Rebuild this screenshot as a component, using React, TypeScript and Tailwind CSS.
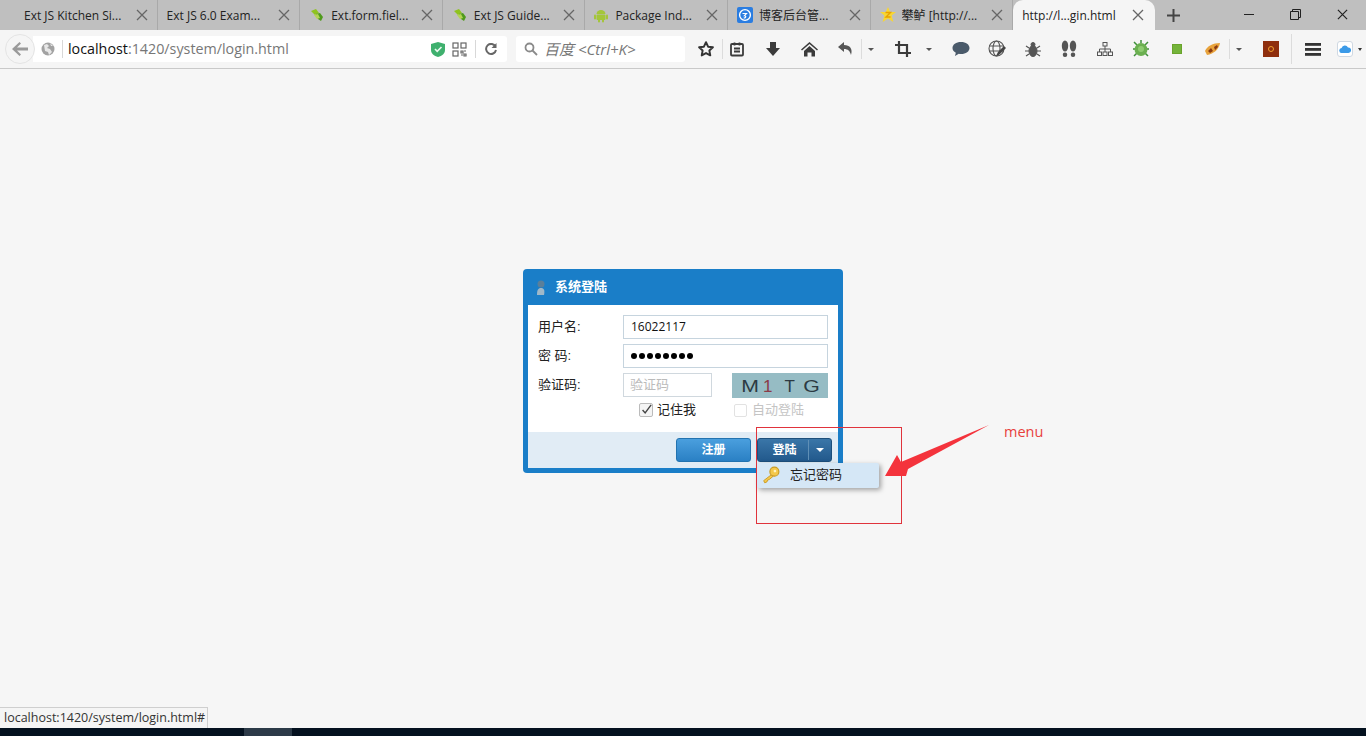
import { ReactNode } from 'react';

const ui = "font-['Open_Sans','Noto_Sans_CJK_SC',sans-serif]";
const cjk = "font-['Liberation_Sans','Noto_Sans_CJK_SC',sans-serif]";

const CloseX = ({ size = 12, color = '#666' }: { size?: number; color?: string }) => (
    <svg width={size} height={size} viewBox="0 0 12 12" stroke={color} strokeWidth="1.3" fill="none"><path d="M1 1 11 11M11 1 1 11" /></svg>
);

const LeafIcon = () => (
    <svg width="16" height="16" viewBox="0 0 16 16"><path d="M2 4 7 2l3 4-4 2z" fill="#8fc31f" /><path d="M7 7l4-1 3 4-2 4-3-2z" fill="#4f9a1c" /><path d="M5 8l4-1 2 4-3 1z" fill="#b4d455" /></svg>
);
const AndroidIcon = () => (
    <svg width="16" height="16" viewBox="0 0 16 16" fill="#a4c639"><path d="M3.5 7a4.5 4 0 0 1 9 0z" /><rect x="3.5" y="7.6" width="9" height="5.4" rx="1" /><rect x="1" y="7.6" width="2" height="5" rx="1" /><rect x="13" y="7.6" width="2" height="5" rx="1" /><rect x="5" y="12" width="2" height="3.4" rx="1" /><rect x="9" y="12" width="2" height="3.4" rx="1" /></svg>
);
const BlogIcon = () => (
    <svg width="16" height="16" viewBox="0 0 16 16"><rect width="16" height="16" rx="2" fill="#2a7de1" /><circle cx="8" cy="8" r="5.4" fill="none" stroke="#fff" strokeWidth="1.4" /><path d="M5.5 6.5h4l-2 2.2c1.6 0 2 2.4-.8 2.4" fill="none" stroke="#fff" strokeWidth="1.2" /></svg>
);
const ZIcon = () => (
    <svg width="16" height="16" viewBox="0 0 16 16"><path d="M8 0l2.2 5H16l-4.4 3.6L13.4 15 8 11.6 2.6 15l1.8-6.4L0 5h5.8z" fill="#f7d634" /><path d="M5.5 5.5h5L6 10h4.6" fill="none" stroke="#e9a100" strokeWidth="1.4" /></svg>
);

const tabs: { title: string; icon?: ReactNode; cls: string }[] = [
    { title: 'Ext JS Kitchen Si...', cls: 'pl-[9px]' },
    { title: 'Ext JS 6.0 Exam...', cls: 'pl-[9px]' },
    { title: 'Ext.form.fiel...', icon: <LeafIcon />, cls: 'pl-[9px]' },
    { title: 'Ext JS Guide...', icon: <LeafIcon />, cls: 'pl-[9px]' },
    { title: 'Package Ind...', icon: <AndroidIcon />, cls: 'pl-[8px]' },
    { title: '博客后台管...', icon: <BlogIcon />, cls: 'pl-[9px]' },
    { title: '攀鲈 [http://...', icon: <ZIcon />, cls: 'pl-[9px]' },
];

const Sep = ({ className = 'h-5' }: { className?: string }) => <div className={`w-px bg-[#dcdcdc] ${className}`} />;
const Caret = () => <div className="h-0 w-0 border-x-[3px] border-t-[3px] border-x-transparent border-t-[#555]" />;

const dark = '#3b3b3b';

// x is the icon's centre on the page
const toolIcons: { x: number; w: number; el: ReactNode }[] = [
    { x: 706, w: 24, el: <svg width="18" height="18" viewBox="0 0 24 24" fill="none" stroke="#333" strokeWidth="2.6" strokeLinejoin="round"><path d="m12 3 2.8 5.9 6.4.8-4.7 4.4 1.2 6.4L12 17.4l-5.7 3.1 1.2-6.4-4.7-4.4 6.4-.8z" /></svg> },
    { x: 722, w: 1, el: <Sep /> },
    { x: 737, w: 24, el: <svg width="16" height="16" viewBox="0 0 16 16" fill="none" stroke={dark} strokeWidth="1.8"><rect x="2" y="3" width="12" height="11.5" rx="1" /><path d="M5.5 1.5v3M10.5 1.5v3M5 7.5h6M5 10.5h6" /></svg> },
    { x: 773, w: 24, el: <svg width="16" height="16" viewBox="0 0 16 16" fill={dark}><path d="M5 1h6v6h4l-7 8-7-8h4z" /></svg> },
    { x: 809, w: 24, el: <svg width="17" height="16" viewBox="0 0 17 16" fill={dark}><path d="M8.5 1 0 8.500l1 1L8.500 3 16 9.500l1-1zM3 10l5.500-5 5.500 5v5.500h-3.500v-4h-4v4H3z" /></svg> },
    { x: 845, w: 24, el: <svg width="17" height="16" viewBox="0 0 17 16" fill="none"><path d="M7 1 1 6l6 5V8c4 0 6 2 7 6 2-6-1-10-7-10z" fill="#555" /></svg> },
    { x: 861, w: 1, el: <Sep /> },
    { x: 871, w: 8, el: <Caret /> },
    { x: 903, w: 24, el: <svg width="16" height="16" viewBox="0 0 16 16" fill="none" stroke={dark} strokeWidth="2.2"><path d="M4 0v12h12M0 4h12v12" /></svg> },
    { x: 929, w: 8, el: <Caret /> },
    { x: 961, w: 24, el: <svg width="18" height="16" viewBox="0 0 18 16" fill="#4a5a6a"><path d="M9 1c5 0 8.500 2.600 8.500 6S14 13 9 13c-.8 0-1.500 0-2.200-.2L3 15l.8-3.300C1.700 10.700.5 9 .5 7 .5 3.600 4 1 9 1z" /></svg> },
    { x: 997, w: 24, el: <svg width="18" height="18" viewBox="0 0 18 18" fill="none" stroke="#555" strokeWidth="1.1"><circle cx="8.500" cy="8.500" r="7.500" /><ellipse cx="8.500" cy="8.500" rx="3.500" ry="7.500" /><path d="M1 6h15M1 11h15" /><path d="m8 16 2-4 6-6 2 2-6 6z" fill="#444" stroke="none" /></svg> },
    { x: 1033, w: 24, el: <svg width="16" height="17" viewBox="0 0 16 17" fill="#555" stroke="#555"><ellipse cx="8" cy="10" rx="4" ry="5.500" /><circle cx="8" cy="3.500" r="2" /><path d="M1 5l3 2M15 5l-3 2M0 10h4M16 10h-4M1 15l3-2M15 15l-3-2" fill="none" strokeWidth="1.2" /></svg> },
    { x: 1069, w: 24, el: <svg width="16" height="18" viewBox="0 0 16 18" fill="#555"><ellipse cx="4" cy="6" rx="3.200" ry="5.500" /><ellipse cx="12" cy="6" rx="3.200" ry="5.500" /><rect x="1.800" y="12.500" width="4.400" height="4.500" rx="2" /><rect x="9.800" y="12.500" width="4.400" height="4.500" rx="2" /></svg> },
    { x: 1105, w: 24, el: <svg width="16" height="16" viewBox="0 0 16 16" fill="none" stroke="#555"><rect x="6" y="1.500" width="4" height="3.500" /><path d="M8 5v3M2.500 11V8h11v3M8 8v3" /><rect x=".5" y="11" width="4" height="3.500" /><rect x="6" y="11" width="4" height="3.500" /><rect x="11.500" y="11" width="4" height="3.500" /></svg> },
    { x: 1141, w: 24, el: <svg width="18" height="18" viewBox="0 0 18 18"><path d="M2 2l3 3M16 2l-3 3M1 9h2M15 9h2M2 16l3-3M16 16l-3-3M9 0v3" stroke="#3f8f3a" strokeWidth="1.500" /><circle cx="9" cy="9.500" r="6.500" fill="#6bb050" /><circle cx="9" cy="9" r="3" fill="#8ecb70" /></svg> },
    { x: 1177, w: 24, el: <div className="h-[10px] w-[10px] border border-[#6aa32c] bg-[#74b43a]" /> },
    { x: 1213, w: 24, el: <svg width="18" height="14" viewBox="0 0 18 14"><path d="M1 9c2-5 8-8 15-8-1 6-6 11-13 12z" fill="#e8a33c" /><path d="M4 9l3-3 2 3-3 2zM10 5l3-2 1 2-3 3z" fill="#8a3a12" /></svg> },
    { x: 1229, w: 1, el: <Sep /> },
    { x: 1239, w: 8, el: <Caret /> },
    { x: 1271, w: 24, el: <div className="flex h-4 w-4 items-center justify-center bg-[#8f2f0e]"><div className="h-[6px] w-[6px] rounded-full border border-[#f0a030]" /></div> },
    { x: 1291, w: 1, el: <Sep className="h-[30px]" /> },
    { x: 1313, w: 24, el: <svg width="16" height="13" viewBox="0 0 16 13" fill="#333"><rect width="16" height="2.800" /><rect y="5" width="16" height="2.800" /><rect y="10" width="16" height="2.800" /></svg> },
    { x: 1345, w: 20, el: <div className="flex h-4 w-4 items-center justify-center rounded-[3px] border border-[#cfd8e2] bg-white"><svg width="12" height="8" viewBox="0 0 12 8" fill="#3b9ae8"><path d="M3 8a2.500 2.500 0 0 1-.4-5A3.500 3.500 0 0 1 9 2.400 2.800 2.800 0 0 1 9.500 8z" /></svg></div> },
    { x: 1360, w: 6, el: <div className="h-0 w-0 border-x-[2px] border-t-[3px] border-x-transparent border-t-[#333]" /> },
];

function Toolbar() {
    let right = 685;
    return (
        <div className="flex items-center">
            {toolIcons.map((icon) => {
                const left = icon.x - icon.w / 2;
                const gap = left - right;
                right = left + icon.w;
                return <div key={icon.x} className="flex shrink-0 items-center justify-center" style={{ width: icon.w, marginLeft: gap }}>{icon.el}</div>;
            })}
        </div>
    );
}

function Field({ label, children }: { label: string; children: ReactNode }) {
    return (
        <div className="flex h-[24px] items-center">
            <span className="w-[85px] text-[13px] text-[#222]">{label}</span>
            {children}
        </div>
    );
}

export default function App() {
    return (
        <div className={`flex h-[736px] w-[1366px] flex-col overflow-hidden bg-[#f6f6f6] ${ui}`}>
            {/* tab strip */}
            <div className="flex h-[30px] shrink-0 bg-[#bfbfbf] pl-[15px]">
                {tabs.map((tab) => (
                    <div key={tab.title} className={`flex h-[30px] w-[142.6px] shrink-0 items-center border-r border-[#a9a9a9] pr-[9px] ${tab.cls}`}>
                        {tab.icon && <span className="mr-[6px] shrink-0">{tab.icon}</span>}
                        <span className="flex-1 truncate whitespace-nowrap pt-[1px] text-[12px] text-[#222]">{tab.title}</span>
                        <CloseX />
                    </div>
                ))}
                <div className="flex h-[30px] w-[142px] shrink-0 items-center rounded-t-[10px] bg-[#f5f5f5] pl-[9px] pr-[11px]">
                    <span className="flex-1 whitespace-nowrap pt-[1px] text-[12px] text-[#222]">http://l...gin.html</span>
                    <CloseX />
                </div>
                <div className="ml-[12px] flex h-[30px] items-center">
                    <svg width="13" height="13" viewBox="0 0 13 13" stroke="#444" strokeWidth="2"><path d="M6.500 0v13M0 6.500h13" /></svg>
                </div>
                <div className="ml-auto flex h-[30px] items-start">
                    <span className="flex w-[46px] justify-center pt-[14px]"><svg width="10" height="1"><rect width="10" height="1" fill="#222" /></svg></span>
                    <span className="flex w-[46px] justify-center pt-[9px]"><svg width="11" height="11" viewBox="0 0 11 11" fill="none" stroke="#222"><path d="M.5 2.500h8v8h-8zM2.500 2.500v-2h8v8h-2" /></svg></span>
                    <span className="flex w-[48px] justify-center pt-[9px]"><CloseX size={11} color="#222" /></span>
                </div>
            </div>

            {/* toolbar */}
            <div className="flex h-[39px] shrink-0 items-center border-b border-[#c9c9c9] bg-[#f5f5f5]">
                <div className="z-10 ml-[5px] flex h-[30px] w-[30px] shrink-0 items-center justify-center rounded-full border border-[#e4e4e4] bg-[#f5f5f5]">
                    <svg width="16" height="14" viewBox="0 0 16 14" fill="#9a9a9a"><path d="M7.500 0 0 7l7.500 7 1.500-1.600L5 8.500h11v-3H5l4-3.900z" /></svg>
                </div>
                <div className="-ml-[2px] flex h-[26px] w-[474px] shrink-0 items-center rounded-r-[3px] bg-white pl-[8px] pr-[8px]">
                    <svg width="14" height="14" viewBox="0 0 14 14"><circle cx="7" cy="7" r="6.500" fill="#a2a2a2" /><path d="M3 3l3-1 2 2-2 2 3 1 2 3-3 3-1-3-3-1zM9 1l3 3-2 0z" fill="#e8e8e8" /></svg>
                    <div className="ml-[7px] h-[18px] w-px bg-[#d8d8d8]" />
                    <span className="ml-[5px] whitespace-nowrap text-[14.3px] text-[#777]"><span className="text-[#111]">localhost</span>:1420/system/login.html</span>
                    <span className="ml-auto flex items-center gap-[7px]">
                        <svg width="14" height="15" viewBox="0 0 14 15"><path d="M7 0 14 2v6c0 3.500-3 6-7 7-4-1-7-3.500-7-7V2z" fill="#3fb06e" /><path d="m4 7 2.200 2.400L10.500 5" fill="none" stroke="#e8f8ee" strokeWidth="1.600" /></svg>
                        <svg width="16" height="15" viewBox="0 0 16 15" fill="none" stroke="#666" strokeWidth="1.200"><rect x="1" y="1" width="5" height="5" /><rect x="9" y="1" width="5" height="5" /><rect x="1" y="9" width="5" height="5" /><path d="M9 9h2v2H9zM12 12h2v2h-2zM12 9h2M9 13h2" /></svg>
                    </span>
                    <div className="ml-[7px] h-[18px] w-px bg-[#d8d8d8]" />
                    <span className="ml-[7px] flex w-[16px] justify-center">
                        <svg width="12" height="12" viewBox="0 0 12 12" fill="none" stroke="#666" strokeWidth="2"><path d="M10.500 3.500A5 5 0 1 0 11 7" /><path d="M11.500 0v5h-5z" fill="#666" stroke="none" /></svg>
                    </span>
                </div>
                <div className="ml-[9px] flex h-[26px] w-[169px] shrink-0 items-center rounded-[3px] bg-white pl-[8px]">
                    <svg width="14" height="14" viewBox="0 0 14 14" fill="none" stroke="#8a8a8a" strokeWidth="1.800"><circle cx="5.500" cy="5.500" r="4" /><path d="m8.500 8.500 4.500 4.500" /></svg>
                    <span className="ml-[6px] whitespace-nowrap text-[15px] italic text-[#777]">百度 &lt;Ctrl+K&gt;</span>
                </div>
                <Toolbar />
            </div>

            {/* page */}
            <div className={`relative flex min-h-0 flex-1 flex-col ${cjk}`}>
                <div className="flex flex-1 justify-center pt-[200px]">
                    <LoginWindow />
                </div>

                {/* annotation */}
                <div className="absolute left-[756px] top-[358px] h-[97px] w-[146px] border border-[#e0333c]" />
                <svg className="absolute left-[880px] top-[350px]" width="115" height="60" viewBox="0 0 115 60">
                    <path d="M109 6 28 50l-2 7H5l12-21 4 7z" fill="#f4333c" />
                </svg>
                <span className="absolute left-[1004px] top-[352px] font-['Open_Sans',sans-serif] text-[14.5px] text-[#e8403c]">menu</span>

                {/* status bar */}
                <div className="absolute bottom-[8px] left-0 flex h-[21px] w-[208px] items-center border-r border-t border-[#cfcfcf] bg-[#f5f5f5] pl-[4px]">
                    <span className={`whitespace-nowrap text-[12.5px] text-[#333] ${ui}`}>localhost:1420/system/login.html#</span>
                </div>

                {/* taskbar sliver */}
                <div className="flex h-[8px] shrink-0 bg-[#04111f] pl-[244px]">
                    <div className="h-[8px] w-[48px] bg-[#2c3a48]" />
                </div>
            </div>
        </div>
    );
}

function LoginWindow() {
    return (
        <div className="relative h-[204px] w-[320px] rounded-[4px] bg-[#1a7ec8] px-[5px] pb-[5px]">
            <div className="flex h-[36px] items-center pl-[6px]">
                <svg width="13" height="15" viewBox="0 0 13 15"><circle cx="7" cy="4" r="3.500" fill="#5a7f9a" /><path d="M3 15c0-5 1-7 4-7s4 2 3 7z" fill="#9fb8c8" /></svg>
                <span className="ml-[8px] text-[13px] font-bold text-white">系统登陆</span>
            </div>
            <div className="flex h-[163px] flex-col bg-white">
                <div className="flex flex-1 flex-col gap-[5px] pl-[10px] pr-[10px] pt-[10px]">
                    <Field label="用户名:">
                        <div className="flex h-[24px] w-[205px] items-center border border-[#c6d4de] pl-[7px] font-['Open_Sans',sans-serif] text-[12px] text-[#111]">16022117</div>
                    </Field>
                    <Field label="密 码:">
                        <div className="flex h-[24px] w-[205px] items-center gap-[2px] border border-[#c6d4de] pl-[7px]">
                            {[0, 1, 2, 3, 4, 5, 6, 7].map((d) => <span key={d} className="h-[6px] w-[6px] rounded-full bg-black" />)}
                        </div>
                    </Field>
                    <Field label="验证码:">
                        <div className="flex h-[24px] w-[89px] items-center border border-[#d0d8de] pl-[6px] text-[13px] text-[#bbb]">验证码</div>
                        <div className="ml-[20px] flex h-[25px] w-[96px] items-center bg-[#96bcc4] pl-[9px] pt-[3px] font-['Liberation_Sans',sans-serif] text-[17px] leading-none text-[#2c3a42]">
                            <span className="w-[18px] scale-x-125 text-center">M</span>
                            <span className="ml-[4px] text-[#8a3a48]">1</span>
                            <span className="ml-[12px]">T</span>
                            <span className="ml-[10px] scale-x-125">G</span>
                        </div>
                    </Field>
                    <div className="flex h-[16px] items-center pl-[101px]">
                        <span className="flex h-[14px] w-[14px] items-center justify-center rounded-[2px] border border-[#bbb] bg-[#f4f4f4]">
                            <svg width="14" height="14" viewBox="0 0 14 14" fill="none" stroke="#444" strokeWidth="1.600"><path d="m3 7 3 3.500L13 1" /></svg>
                        </span>
                        <span className="ml-[4px] text-[13px] text-[#222]">记住我</span>
                        <span className="ml-[38px] h-[13px] w-[13px] rounded-[2px] border border-[#e2e2e2]" />
                        <span className="ml-[5px] text-[13px] text-[#c4c4c4]">自动登陆</span>
                    </div>
                </div>
                <div className="flex h-[36px] shrink-0 items-center justify-end gap-[6px] bg-[#e1ecf5] pr-[6px]">
                    <div className="flex h-[24px] w-[75px] items-center justify-center rounded-[3px] border border-[#2273b0] bg-gradient-to-b from-[#4a9fde] to-[#2a80c4] text-[12px] font-bold text-white">注册</div>
                    <div className="relative flex h-[24px] w-[75px] items-center rounded-[3px] border border-[#1c4f7c] bg-gradient-to-b from-[#3a76a8] to-[#22598c] text-[12px] font-bold text-white">
                        <span className="flex-1 pl-[3px] text-center">登陆</span>
                        <span className="flex h-[20px] w-[23px] items-center justify-center border-l border-[#5f8fb6]">
                            <span className="h-0 w-0 border-x-[4px] border-t-[4px] border-x-transparent border-t-white" />
                        </span>
                    </div>
                </div>
            </div>
            {/* dropdown menu */}
            <div className="absolute left-[234px] top-[194px] flex h-[25px] w-[122px] items-center rounded-[2px] bg-[#d5e7f6] pb-[1px] pl-[5px] shadow-[2px_2px_5px_rgba(0,0,0,0.35)]">
                <svg width="18" height="18" viewBox="0 0 16 16"><circle cx="11" cy="5" r="4" fill="#f4c84a" stroke="#c99a20" /><circle cx="11.500" cy="4.500" r="1.200" fill="#fff3c0" /><path d="M8 8 1.500 13l1 2 2-1 .5-1.500 1.500-.5L10 9z" fill="#f4c84a" stroke="#c99a20" strokeWidth=".8" /></svg>
                <span className="ml-[10px] text-[13px] text-[#222]">忘记密码</span>
            </div>
        </div>
    );
}
